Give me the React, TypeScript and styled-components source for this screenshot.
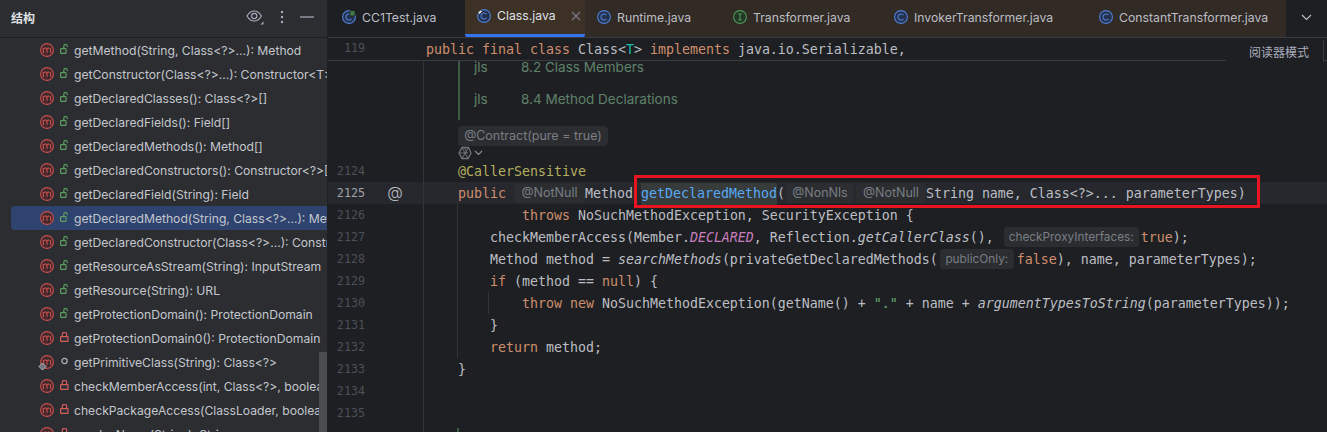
import styled, { createGlobalStyle } from "styled-components";
import type { ReactNode } from "react";

const UI_FONT = `Inter, "Noto Sans CJK SC", sans-serif`;
const CODE_FONT = `"DejaVu Sans Mono", monospace`;

const TOKEN_COLORS = {
  kw: "#cf8e6d",
  ann: "#b3ae60",
  fn: "#56a8f5",
  str: "#6aab73",
  constant: "#c77dbb",
  generic: "#16baac",
  plain: "#bcbec4",
} as const;

type Access = "public" | "private" | "package";

const MEMBERS: { label: string; access: Access; selected?: boolean; pinned?: boolean }[] = [
  { label: "getMethod(String, Class<?>...): Method", access: "public" },
  { label: "getConstructor(Class<?>...): Constructor<T>", access: "public" },
  { label: "getDeclaredClasses(): Class<?>[]", access: "public" },
  { label: "getDeclaredFields(): Field[]", access: "public" },
  { label: "getDeclaredMethods(): Method[]", access: "public" },
  { label: "getDeclaredConstructors(): Constructor<?>[]", access: "public" },
  { label: "getDeclaredField(String): Field", access: "public" },
  { label: "getDeclaredMethod(String, Class<?>...): Method", access: "public", selected: true },
  { label: "getDeclaredConstructor(Class<?>...): Constructor<T>", access: "public" },
  { label: "getResourceAsStream(String): InputStream", access: "public" },
  { label: "getResource(String): URL", access: "public" },
  { label: "getProtectionDomain(): ProtectionDomain", access: "public" },
  { label: "getProtectionDomain0(): ProtectionDomain", access: "private" },
  { label: "getPrimitiveClass(String): Class<?>", access: "package", pinned: true },
  { label: "checkMemberAccess(int, Class<?>, boolean)", access: "private" },
  { label: "checkPackageAccess(ClassLoader, boolean)", access: "private" },
  { label: "resolveName(String): String", access: "private" },
];

const TABS: { name: string; width: number; kind: "class" | "interface"; badge?: "run" | "pin"; active?: boolean }[] = [
  { name: "CC1Test.java", width: 135, kind: "class", badge: "run" },
  { name: "Class.java", width: 120, kind: "class", badge: "pin", active: true },
  { name: "Runtime.java", width: 136, kind: "class" },
  { name: "Transformer.java", width: 161, kind: "interface" },
  { name: "InvokerTransformer.java", width: 205, kind: "class" },
  { name: "ConstantTransformer.java", width: 199, kind: "class" },
];

const GlobalStyle = createGlobalStyle`
  html, body {
    margin: 0;
    height: 432px;
    overflow: hidden;
    background: #1e1f22;
  }
`;

const Page = styled.div`
  display: flex;
  width: 1327px;
  height: 432px;
  overflow: hidden;
  font-family: ${UI_FONT};
`;

const Sidebar = styled.aside`
  position: relative;
  flex: 0 0 327px;
  height: 432px;
  overflow: hidden;
  background: #2b2d30;
  border-right: 1px solid #1e1f22;
`;

const SidebarHeader = styled.header`
  display: flex;
  align-items: center;
  height: 38px;
  padding: 0 13px 3px 11px;
  box-sizing: border-box;
  border-bottom: 1px solid #1e1f22;
  color: #dfe1e5;
`;

const SidebarTitle = styled.span`
  flex: 1;
  font-size: 12px;
  font-weight: 700;
`;

const HeaderActions = styled.div`
  display: flex;
  align-items: center;
  gap: 16px;
`;

const MemberRow = styled.div<{ $selected?: boolean }>`
  display: flex;
  align-items: center;
  height: 24px;
  margin-left: 11px;
  padding-left: 29px;
  border-radius: 4px 0 0 4px;
  white-space: nowrap;
  overflow: hidden;
  font-size: 12.15px;
  color: #c4c7ce;
  background: ${({ $selected }) => ($selected ? "#2e436e" : "transparent")};
`;

const IconSlot = styled.span`
  position: relative;
  display: flex;
  flex: none;
  width: 14px;
  height: 14px;
  margin-top: -1px;
`;

const AccessSlot = styled.span`
  display: flex;
  flex: none;
  justify-content: center;
  width: 9px;
  margin: -2px 5px 0 6px;
`;

const PinOverlay = styled.svg`
  position: absolute;
  left: -2px;
  top: 7px;
`;

const ScrollThumb = styled.div`
  position: absolute;
  right: 0;
  top: 352px;
  width: 8px;
  height: 80px;
  background: #4a4c4f;
`;

const Main = styled.main`
  flex: 1;
  min-width: 0;
  display: flex;
  flex-direction: column;
`;

const TabBar = styled.nav`
  display: flex;
  height: 38px;
  flex: none;
  box-sizing: border-box;
  padding-left: 2px;
  border-bottom: 1px solid #393b40;
  background: #1e1f22;
`;

const Tab = styled.div<{ $width: number; $active?: boolean; $plain?: boolean }>`
  display: flex;
  flex: none;
  align-items: center;
  gap: 6px;
  width: ${({ $width }) => $width}px;
  height: 37px;
  box-sizing: border-box;
  padding: 0 0 3px 12px;
  font-size: 12.25px;
  white-space: nowrap;
  color: ${({ $active }) => ($active ? "#dfe1e5" : "#bcbec4")};
  background: ${({ $active, $plain }) => ($active ? "#3d3025" : $plain ? "#1e1f22" : "#312a25")};
  border-bottom: ${({ $active }) => ($active ? "3px solid #3574f0" : "0")};
  border-radius: ${({ $active }) => ($active ? "0 0 2px 2px" : "0")};
`;

const TabClose = styled.svg`
  margin-left: 9px;
`;

const TabOverflow = styled.div`
  display: flex;
  flex: 1;
  align-items: center;
  justify-content: center;
  padding-bottom: 3px;
  height: 34px;
  background: #1e1f22;
`;

const StickyLine = styled.div`
  position: relative;
  display: flex;
  flex: none;
  height: 23px;
  box-sizing: border-box;
  border-bottom: 1px solid #393b40;
  background: #1e1f22;
`;

const StickyNumber = styled.span`
  width: 37px;
  text-align: right;
  font: 11.7px/21px ${CODE_FONT};
  color: #4b5059;
`;

const StickyCode = styled.code`
  margin-left: 61px;
  padding-top: 1px;
  font: 13.29px/21px ${CODE_FONT};
  color: ${TOKEN_COLORS.plain};
  white-space: pre;
`;

const ReaderMode = styled.div`
  position: absolute;
  right: 3px;
  top: 2px;
  display: flex;
  align-items: center;
  height: 22px;
  padding: 0 14px 0 23px;
  background: #1e1f22;
  border-right: 1px solid #393b40;
  font-size: 12px;
  color: #a8adbd;
`;

const EditorBody = styled.div`
  flex: 1;
  min-height: 0;
  overflow: hidden;
  background: #1e1f22;
`;

const Line = styled.div<{ $height?: number; $current?: boolean }>`
  display: flex;
  flex: none;
  height: ${({ $height }) => $height ?? 22}px;
  background: ${({ $current }) => ($current ? "#26282e" : "transparent")};
`;

const Gutter = styled.div`
  display: flex;
  flex: none;
  width: 95px;
  border-right: 1px solid #313438;
`;

const LineNumber = styled.span<{ $current?: boolean }>`
  width: 37px;
  text-align: right;
  font: 11.7px/22px ${CODE_FONT};
  color: ${({ $current }) => ($current ? "#a1a3ab" : "#4b5059")};
`;

const GutterMark = styled.span`
  width: 18px;
  margin-left: 21px;
  text-align: center;
  font-size: 16px;
  font-weight: 300;
  line-height: 21px;
  color: #bcbec4;
`;

// depth 1 draws the method guide, depth 2 adds the if-block guide
const guideImages = (depth: number) =>
  depth === 0
    ? "none"
    : depth === 1
      ? "linear-gradient(#313438, #313438)"
      : "linear-gradient(#313438, #313438), linear-gradient(#313438, #313438)";

const Code = styled.code<{ $guides?: number }>`
  position: relative;
  flex: 1;
  box-sizing: border-box;
  height: 22px;
  padding: 1px 0 0 34px;
  font: 13.29px/22px ${CODE_FONT};
  color: ${TOKEN_COLORS.plain};
  white-space: pre;
  background-image: ${({ $guides }) => guideImages($guides ?? 0)};
  background-repeat: no-repeat;
  background-size: 1px 100%;
  background-position: 33px 0, 64px 0;
`;

const Token = styled.span<{ $kind: keyof typeof TOKEN_COLORS; $italic?: boolean }>`
  color: ${({ $kind }) => TOKEN_COLORS[$kind]};
  font-style: ${({ $italic }) => ($italic ? "italic" : "normal")};
`;

const Occurrence = styled.span`
  display: inline-block;
  color: ${TOKEN_COLORS.fn};
  background: #373b39;
`;

const Inlay = styled.span<{ $width: number; $left?: number; $right?: number; $param?: boolean }>`
  display: inline-block;
  width: ${({ $width }) => $width}px;
  height: 20px;
  margin: 0 ${({ $right }) => $right ?? 0}px 0 ${({ $left }) => $left ?? 0}px;
  border-radius: 4px;
  background: #2b2d30;
  color: #7a7e85;
  font: ${({ $param }) => ($param ? "11.8px" : "12.5px")}/20px ${UI_FONT};
  text-align: center;
  vertical-align: top;
`;

const DocBlock = styled.div`
  display: flex;
  flex: 1;
  flex-direction: column;
  justify-content: flex-end;
  height: 59px;
  margin-left: 34px;
  padding: 0 0 5px 14px;
  box-sizing: border-box;
  overflow: hidden;
  border-left: 2px solid #3d5a45;
`;

const DocRow = styled.div`
  display: flex;
  flex: none;
  align-items: center;
  height: 32px;
  font-size: 13.5px;
  color: #5f826b;
`;

const DocTag = styled.span`
  width: 47px;
`;

const NextDocMark = styled.div`
  width: 2px;
  height: 4px;
  margin: 4px 0 0 33px;
  background: #3d5a45;
`;

const HintCell = styled.div`
  flex: 1;
  padding: 4px 0 0 34px;
`;

const ContractPill = styled.span`
  display: inline-block;
  width: 150px;
  height: 20px;
  border-radius: 4px;
  background: #2b2d30;
  color: #7a7e85;
  font-size: 12.5px;
  line-height: 20px;
  text-align: center;
`;

const AiHint = styled.div`
  display: flex;
  align-items: center;
  gap: 2px;
  padding-left: 34px;
`;

const Callout = styled.div`
  position: absolute;
  left: 210px;
  top: -7px;
  width: 620px;
  height: 27px;
  border: 3px solid #e8141f;
  pointer-events: none;
`;

const LockIcon = ({ open, color }: { open?: boolean; color: string }) => (
  <svg width="9" height="10" viewBox="0 0 9 10" fill="none" stroke={color} strokeWidth="1.2">
    <rect x="0.6" y="4.6" width={open ? 5.4 : 7.4} height="4.8" rx="0.6" />
    {open ? <path d="M3.8 4.4V2.2a1.7 1.7 0 0 1 3.4 0v.8" /> : <path d="M2.3 4.4V2.4a2.2 2.2 0 0 1 4.4 0v2" />}
  </svg>
);

const AccessIcon = ({ access }: { access: Access }) => {
  if (access === "public") return <LockIcon open color="#5f9e62" />;
  if (access === "private") return <LockIcon color="#db5c5c" />;
  return (
    <svg width="9" height="10" viewBox="0 0 9 10" fill="none" stroke="#a8adbd" strokeWidth="1.3">
      <circle cx="4.5" cy="5" r="2.6" />
    </svg>
  );
};

const MethodIcon = () => (
  <svg width="14" height="14" viewBox="0 0 14 14" fill="#43292b" stroke="#c9504f" strokeWidth="1.1">
    <circle cx="7" cy="7" r="6.4" />
    <path d="M3.4 10V4.9M3.4 5.9c.6-1.1 3.4-1.5 3.6.3V10M7 6.2c.4-1.7 3.7-1.7 3.7.5V10" fill="none" />
  </svg>
);

const FileIcon = ({ kind, badge }: { kind: "class" | "interface"; badge?: "run" | "pin" }) => {
  const stroke = kind === "class" ? "#4f7fd9" : "#4f9a58";
  const fill = kind === "class" ? "#25324d" : "#253627";
  return (
    <svg width="14" height="14" viewBox="0 0 14 14" fill={fill} stroke={stroke} strokeWidth="1.1">
      <circle cx="7" cy="7" r="6.4" />
      {kind === "class" ? (
        <path d="M9.4 5.2a3 3 0 1 0 0 3.6" fill="none" />
      ) : (
        <path d="M5.2 4h3.6M5.2 10h3.6M7 4v6" fill="none" />
      )}
      {badge === "run" && <path d="M8 0.5l5 0.2v5.2H8z" fill="#3f7d48" stroke="#1e1f22" strokeWidth="0.8" />}
      {badge === "pin" && <path d="M0.8 3.6L3.6 0.8l1.8 1.8-2.8 2.8z" fill="#dfe1e5" stroke="#1e1f22" strokeWidth="0.8" />}
    </svg>
  );
};

const AiGlyph = () => (
  <svg width="14" height="14" viewBox="0 0 14 14" fill="none" stroke="#6f737a" strokeWidth="1.3">
    <path d="M4 1.5h6.5L13 7l-3 5.5H4L1 7z" />
    <path d="M4 1.5l6 11M1 7h8.5l-3-5M10.5 1.5L4 12.5" strokeWidth="1" />
  </svg>
);

const SmallChevron = () => (
  <svg width="9" height="6" viewBox="0 0 9 6" fill="none" stroke="#8a8e95" strokeWidth="1.1">
    <path d="M1 1l3.5 3.5L8 1" />
  </svg>
);

const EyeIcon = () => (
  <svg width="18" height="16" viewBox="0 0 18 16" fill="none" stroke="#a8adbd" strokeWidth="1.1">
    <path d="M1 7c2-3.4 4.6-5 7.2-5s5.2 1.6 7.2 5c-2 3.4-4.6 5-7.2 5S3 10.4 1 7z" />
    <circle cx="8.2" cy="7" r="2.6" />
    <path d="M17.5 12.5v3h-3z" fill="#a8adbd" stroke="none" />
  </svg>
);

const DotsIcon = () => (
  <svg width="4" height="14" viewBox="0 0 4 14" fill="#a8adbd">
    <circle cx="2" cy="2" r="1.2" />
    <circle cx="2" cy="7" r="1.2" />
    <circle cx="2" cy="12" r="1.2" />
  </svg>
);

const MinusIcon = () => (
  <svg width="14" height="14" viewBox="0 0 14 14" stroke="#a8adbd" strokeWidth="1.2">
    <path d="M0 7h14" />
  </svg>
);

const CodeLine = ({ n, guides = 1, children }: { n: number; guides?: number; children?: ReactNode }) => (
  <Line>
    <Gutter>
      <LineNumber>{n}</LineNumber>
    </Gutter>
    <Code $guides={guides}>{children}</Code>
  </Line>
);

export default function App() {
  return (
    <Page>
      <GlobalStyle />
      <Sidebar>
        <SidebarHeader>
          <SidebarTitle>结构</SidebarTitle>
          <HeaderActions>
            <EyeIcon />
            <DotsIcon />
            <MinusIcon />
          </HeaderActions>
        </SidebarHeader>
        {MEMBERS.map((m) => (
          <MemberRow key={m.label} $selected={m.selected}>
            <IconSlot>
              <MethodIcon />
              {m.pinned && (
                <PinOverlay width="9" height="9" viewBox="0 0 9 9" fill="#6f737a" stroke="#b4b8bf" strokeWidth="1">
                  <path d="M4.5 1L8 4.5 4.5 8 1 4.5z" />
                </PinOverlay>
              )}
            </IconSlot>
            <AccessSlot>
              <AccessIcon access={m.access} />
            </AccessSlot>
            {m.label}
          </MemberRow>
        ))}
        <ScrollThumb />
      </Sidebar>
      <Main>
        <TabBar>
          {TABS.map((t, i) => (
            <Tab key={t.name} $width={t.width} $active={t.active} $plain={i === 0}>
              <FileIcon kind={t.kind} badge={t.badge} />
              {t.name}
              {t.active && (
                <TabClose width="10" height="10" viewBox="0 0 10 10" stroke="#7a7e85" strokeWidth="1.1">
                  <path d="M1 1l8 8M9 1l-8 8" />
                </TabClose>
              )}
            </Tab>
          ))}
          <TabOverflow>
            <svg width="11" height="7" viewBox="0 0 11 7" fill="none" stroke="#bcbec4" strokeWidth="1.2">
              <path d="M1 1l4.5 4.5L10 1" />
            </svg>
          </TabOverflow>
        </TabBar>

        <StickyLine>
          <StickyNumber>119</StickyNumber>
          <StickyCode>
            <Token $kind="kw">public final class </Token>Class&lt;<Token $kind="generic">T</Token>&gt;{" "}
            <Token $kind="kw">implements </Token>java.io.Serializable,
          </StickyCode>
          <ReaderMode>阅读器模式</ReaderMode>
        </StickyLine>

        <EditorBody>
          <Line $height={59}>
            <Gutter />
            <DocBlock>
              <DocRow>
                <DocTag>jls</DocTag>8.2 Class Members
              </DocRow>
              <DocRow>
                <DocTag>jls</DocTag>8.4 Method Declarations
              </DocRow>
            </DocBlock>
          </Line>
          <Line $height={26}>
            <Gutter />
            <HintCell>
              <ContractPill>@Contract(pure = true)</ContractPill>
            </HintCell>
          </Line>
          <Line $height={14}>
            <Gutter />
            <AiHint>
              <AiGlyph />
              <SmallChevron />
            </AiHint>
          </Line>

          <CodeLine n={2124} guides={0}>
            <Token $kind="ann">@CallerSensitive</Token>
          </CodeLine>
          <Line $current>
            <Gutter>
              <LineNumber $current>2125</LineNumber>
              <GutterMark>@</GutterMark>
            </Gutter>
            <Code>
              <Token $kind="kw">public</Token> <Inlay $width={71}>@NotNull</Inlay>Method{" "}
              <Occurrence>getDeclaredMethod</Occurrence>(<Inlay $width={68} $left={1}>@NonNls</Inlay>
              <Inlay $width={70} $left={2}>@NotNull</Inlay>String name, Class&lt;?&gt;... parameterTypes)
              <Callout />
            </Code>
          </Line>
          <CodeLine n={2126}>
            {"        "}
            <Token $kind="kw">throws </Token>NoSuchMethodException, SecurityException {"{"}
          </CodeLine>
          <CodeLine n={2127}>
            {"    "}checkMemberAccess(Member.<Token $kind="constant" $italic>DECLARED</Token>, Reflection.
            <Token $kind="plain" $italic>getCallerClass</Token>(),{" "}
            <Inlay $param $width={135} $left={2} $right={2}>checkProxyInterfaces:</Inlay>
            <Token $kind="kw">true</Token>);
          </CodeLine>
          <CodeLine n={2128}>
            {"    "}Method method = <Token $kind="plain" $italic>searchMethods</Token>(privateGetDeclaredMethods(
            <Inlay $param $width={74} $left={2} $right={3}>publicOnly:</Inlay>
            <Token $kind="kw">false</Token>), name, parameterTypes);
          </CodeLine>
          <CodeLine n={2129}>
            {"    "}<Token $kind="kw">if </Token>(method == <Token $kind="kw">null</Token>) {"{"}
          </CodeLine>
          <CodeLine n={2130} guides={2}>
            {"        "}<Token $kind="kw">throw new </Token>NoSuchMethodException(getName() +{" "}
            <Token $kind="str">"."</Token> + name + <Token $kind="plain" $italic>argumentTypesToString</Token>(parameterTypes));
          </CodeLine>
          <CodeLine n={2131}>{"    }"}</CodeLine>
          <CodeLine n={2132}>
            {"    "}<Token $kind="kw">return </Token>method;
          </CodeLine>
          <CodeLine n={2133} guides={0}>{"}"}</CodeLine>
          <CodeLine n={2134} guides={0} />
          <CodeLine n={2135} guides={0} />
          <Line $height={8}>
            <Gutter />
            <NextDocMark />
          </Line>
        </EditorBody>
      </Main>
    </Page>
  );
}
